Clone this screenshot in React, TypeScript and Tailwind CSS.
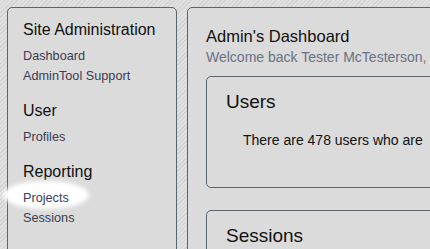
import React from "react";

const font = { fontFamily: '"Liberation Sans", Arial, sans-serif' };

function Heading({ children }: { children: React.ReactNode }) {
  return <div className="text-[16px] leading-[20px] text-[#111111] mb-[6px]">{children}</div>;
}

function NavLink({ children, glow }: { children: React.ReactNode; glow?: boolean }) {
  return (
    <div className="relative text-[12.7px] leading-[20px] text-[#3b3c52]">
      {glow && (
        <div className="absolute left-[-20px] top-[-7px] w-[86px] h-[28px] rounded-[50%] bg-white blur-[2px]" />
      )}
      <span className="relative">{children}</span>
    </div>
  );
}

export default function App() {
  return (
    <div
      style={font}
      className="w-[430px] h-[249px] overflow-hidden flex gap-[10px] pl-[7px] pt-[7px] bg-[repeating-linear-gradient(135deg,#d3d3d3_0px,#d3d3d3_1px,#e0e0e0_1px,#e0e0e0_3px)]"
    >
      <div className="relative shrink-0 w-[170px] h-[300px] border border-[#5a636f] rounded-[5px] bg-[#dbdbdb] pl-[15px] pt-[12px] flex flex-col gap-[15px]">
        <div>
          <Heading>Site Administration</Heading>
          <NavLink>Dashboard</NavLink>
          <NavLink>AdminTool Support</NavLink>
        </div>
        <div>
          <Heading>User</Heading>
          <NavLink>Profiles</NavLink>
        </div>
        <div>
          <Heading>Reporting</Heading>
          <NavLink glow>Projects</NavLink>
          <NavLink>Sessions</NavLink>
        </div>
      </div>
      <div className="shrink-0 w-[320px] h-[300px] border border-[#5a636f] rounded-[5px] bg-[#dbdbdb] pl-[18px] pt-[18px]">
        <div className="text-[16.5px] leading-[20px] text-[#111111]">Admin's Dashboard</div>
        <div className="text-[14px] leading-[18px] text-[#6a7182] mt-[2px] whitespace-nowrap">Welcome back Tester McTesterson,</div>
        <div className="mt-[10px] flex flex-col gap-[22px]">
          <div className="h-[112px] border border-[#5a636f] rounded-[5px] pl-[19px] pt-[13px]">
            <div className="text-[19px] leading-[24px] text-[#111111]">Users</div>
            <div className="text-[14px] leading-[18px] text-[#111111] mt-[17px] pl-[17px] whitespace-nowrap">
              There are 478 users who are
            </div>
          </div>
          <div className="h-[112px] border border-[#5a636f] rounded-[5px] pl-[19px] pt-[13px]">
            <div className="text-[19px] leading-[24px] text-[#111111]">Sessions</div>
          </div>
        </div>
      </div>
    </div>
  );
}
